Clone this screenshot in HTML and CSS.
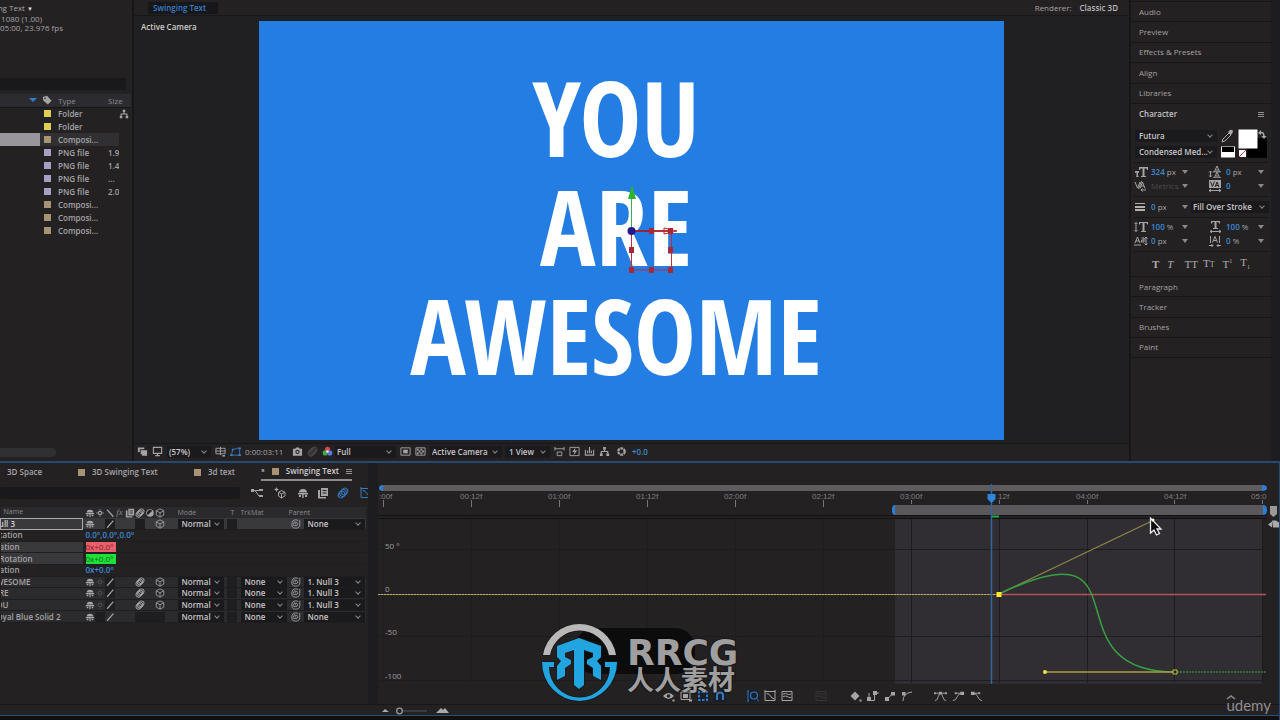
FILE: index.html
```html
<!DOCTYPE html>
<html lang="en">
<head>
<meta charset="utf-8">
<title>Swinging Text</title>
<link rel="stylesheet" href="styles.css">
</head>
<body>
<svg class="defs" aria-hidden="true">
  <symbol id="shy" viewBox="0 0 12 12"><path d="M2 5.500Q2 2 6 2t4 3.500zM1 6h10v1.500H1zM5.300 6h1.400v5H5.300zM2 8h2v2H2zM8 8h2v2H8z"/></symbol>
  <symbol id="sun" viewBox="0 0 12 12"><circle cx="6" cy="6" r="2" fill="none" stroke="currentColor" stroke-width="1.300"/><path d="M5.500 1.500h1V3h-1zM5.500 9h1v1.500h-1zM1.500 5.500H3v1H1.500zM9 5.500h1.500v1H9z"/></symbol>
  <symbol id="slash" viewBox="0 0 12 12"><path d="M2.500 10.500L10 2" stroke="currentColor" stroke-width="1.500"/></symbol>
  <symbol id="back" viewBox="0 0 12 12"><path d="M2.500 2L10 10.500" stroke="currentColor" stroke-width="1.500"/></symbol>
  <symbol id="film" viewBox="0 0 12 12"><path d="M4 1h7v8H4zM1 3h2v7h6v1.500H1z"/><path d="M5.500 3.500h4M5.500 6h4" stroke="#232122"/></symbol>
  <symbol id="blur" viewBox="0 0 12 12"><g fill="none" stroke="currentColor" stroke-width="1.100"><ellipse cx="7.500" cy="4.500" rx="3" ry="3.500" transform="rotate(35 7.500 4.500)"/><ellipse cx="6" cy="6" rx="3" ry="3.500" transform="rotate(35 6 6)"/><ellipse cx="4.500" cy="7.500" rx="3" ry="3.500" transform="rotate(35 4.500 7.500)"/></g></symbol>
  <symbol id="half" viewBox="0 0 12 12"><circle cx="6" cy="6" r="4.500"/><path d="M3.500 8.500a3.500 3.500 0 0 1 5-5z" fill="#232122"/></symbol>
  <symbol id="cube" viewBox="0 0 12 12"><path d="M6 1l4.500 2.300v5.200L6 11 1.500 8.500V3.300zM1.500 3.300L6 5.800l4.500-2.500M6 5.800V11" fill="none" stroke="currentColor"/></symbol>
  <symbol id="whip" viewBox="0 0 12 12"><path d="M6 6a1 1 0 0 1-1-1.500Q7.500 3 8 5.500T5 8 3 5.500 5 2.500M10.500 1v6q0 4-5 4T1 6t4.500-5q2 0 3 1" fill="none" stroke="currentColor"/></symbol>
  <symbol id="tree" viewBox="0 0 12 12"><path d="M4.500 1h3v3h-3zM1 8h3v3H1zM8 8h3v3H8z"/><path d="M6 4v2M2.500 8V6h7v2" fill="none" stroke="currentColor" stroke-width="1.300"/></symbol>
  <symbol id="tag" viewBox="0 0 12 12"><path d="M1 2.500L6 1l5.500 6L7 11.500 1.500 6.500z"/><circle cx="3.700" cy="4" r="1" fill="#2c2c30"/></symbol>
  <symbol id="screen" viewBox="0 0 12 12"><path d="M1.500 1.500h9v6.500h-9zM6 8v2.500M3.500 10.500h5" fill="none" stroke="currentColor" stroke-width="1.200"/></symbol>
  <symbol id="stack" viewBox="0 0 12 12"><path d="M1 1.500h7v2H3v3H1zM4 4.500h7v6H5.500V9H4z"/></symbol>
  <symbol id="grid" viewBox="0 0 12 12"><path d="M1 2.500h10v6H1zM6 1v9M1 5.500h10" fill="none" stroke="currentColor"/><path d="M8 10h3v1.500H8z"/></symbol>
  <symbol id="mask" viewBox="0 0 12 12"><path d="M1.500 10L3 4l5-1.500h2.500V10z" fill="none" stroke="currentColor"/><path d="M0 9h3v2H0zM9 9h3v2H9zM9 1.500h3v2H9zM2 3h2v2H2z"/></symbol>
  <symbol id="camera" viewBox="0 0 12 12"><path d="M1 3h2.500L4.500 1.500h3L8.500 3H11v7.500H1z"/><circle cx="6" cy="6.500" r="2.300" fill="#232122"/><circle cx="6" cy="6.500" r="1.200"/></symbol>
  <symbol id="frame" viewBox="0 0 12 12"><path d="M1 2h10v8H1z" fill="none" stroke="currentColor"/><path d="M3.500 4h5v4h-5z"/></symbol>
  <symbol id="checker" viewBox="0 0 12 12"><path d="M1 2h10v8H1z" fill="none" stroke="currentColor"/><path d="M2 3h2v2H2zM6 3h2v2H6zM4 5h2v2H4zM8 5h2v2H8zM2 7h2v2H2zM6 7h2v2H6z"/></symbol>
  <symbol id="ruler" viewBox="0 0 12 12"><path d="M1 1v4M11 1v4M1 3h10M3.500 6.500h5v4h-5z" fill="none" stroke="currentColor"/></symbol>
  <symbol id="fast" viewBox="0 0 12 12"><path d="M1 1.500h10v9H1z" fill="none" stroke="currentColor"/><path d="M7 2L3.500 6.500H6L5 10l4-5H6.500z"/></symbol>
  <symbol id="tl" viewBox="0 0 12 12"><path d="M1.500 4v6h9V4M4 5v3M6 1v7M8 5v3" fill="none" stroke="currentColor" stroke-width="1.200"/></symbol>
  <symbol id="aperture" viewBox="0 0 12 12"><circle cx="6" cy="6" r="3.500" fill="none" stroke="currentColor" stroke-width="2.500" stroke-dasharray="3 .7"/></symbol>
  <symbol id="flow" viewBox="0 0 12 12"><path d="M0 2h3v3H0zM3 3h5v1H3zM8 2h4v2H8zM8 8h4v2H8z"/><path d="M4 3.500l4 5.500" stroke="currentColor"/></symbol>
  <symbol id="draft" viewBox="0 0 12 12"><path d="M7.500 3.500L11 5.300v3.500L7.500 11 4.500 9V5.300zM4.500 5.300l3 1.500L11 5.300M7.500 7v4" fill="none" stroke="currentColor"/><path d="M2.500 0l.8 1.700L5 2.500l-1.700.8L2.500 5l-.8-1.700L0 2.500l1.700-.8z"/></symbol>
  <symbol id="graph" viewBox="0 0 12 12"><path d="M1 1.500h10v9H1zM2.500 3.500q3 0 4 2.500t4 3M1 0v2M11 0v2" fill="none" stroke="currentColor"/></symbol>
  <symbol id="eye" viewBox="0 0 12 12"><path d="M0 6q5.500-6 11 0-5.500 6-11 0z"/><circle cx="5.500" cy="6" r="1.800" fill="#232122"/><path d="M9.500 9.500h2v2h-2z"/></symbol>
  <symbol id="menuicon" viewBox="0 0 12 12"><path d="M1 2h9v7.500H1z" fill="none" stroke="currentColor"/><path d="M3 4h5v4H3zM9 9.500h3v2H9z"/></symbol>
  <symbol id="box" viewBox="0 0 12 12"><path d="M2 2h8v8H2z" fill="none" stroke="currentColor" stroke-dasharray="1 1"/><path d="M1 1h2v2H1zM5 1h2v2H5zM9 1h2v2H9zM1 5h2v2H1zM9 5h2v2H9zM1 9h2v2H1zM5 9h2v2H5zM9 9h2v2H9z"/></symbol>
  <symbol id="magnet" viewBox="0 0 12 12"><path d="M3 10V5.500a3 3 0 0 1 6 0V10" fill="none" stroke="currentColor" stroke-width="2"/></symbol>
  <symbol id="fit" viewBox="0 0 12 12"><path d="M1 1v10M0 1h2M0 11h2M9.500 8.500L12 11.500" stroke="currentColor"/><circle cx="7" cy="5.500" r="3.500" fill="none" stroke="currentColor" stroke-width="1.200"/></symbol>
  <symbol id="waves" viewBox="0 0 12 12"><path d="M1 1.500h10v9H1zM2 4q3-1 4 0t4 0M2 6.500q3-1 4 0t4 1" fill="none" stroke="currentColor"/></symbol>
  <symbol id="diamond" viewBox="0 0 12 12"><path d="M5 1.500L9.500 6 5 10.500.5 6zM9.500 9.500h2v2h-2z"/></symbol>
  <symbol id="hold" viewBox="0 0 12 12"><path d="M0 7h4v4H0zM6 1h4v4H6z"/><path d="M2 3v4M3 10.500h4.500V5M9 3h3" fill="none" stroke="currentColor"/></symbol>
  <symbol id="linear" viewBox="0 0 12 12"><path d="M1 7h4v4H1zM7 2h4v3.500H7z"/><path d="M3 9l6-5.500" stroke="currentColor"/></symbol>
  <symbol id="autob" viewBox="0 0 12 12"><path d="M1 2h3.500v3.500H1z"/><path d="M2 11Q2 3 11 2" fill="none" stroke="currentColor"/></symbol>
  <symbol id="ease" viewBox="0 0 14 12"><path d="M0 2h2v2H0zM5.500 1.500h3v3h-3zM12 2h2v2h-2z"/><path d="M1 3h12M1 11q2.500 0 3.500-4T7 3t2.500 4T13 11" fill="none" stroke="currentColor"/></symbol>
  <symbol id="easein" viewBox="0 0 14 12"><path d="M3 2h2v2H3zM9 1.500h4v3.500H9z"/><path d="M4 3h6M1 11q3 0 4.500-4T11 3" fill="none" stroke="currentColor"/></symbol>
  <symbol id="easeout" viewBox="0 0 14 12"><path d="M1 1.500h4v3.500H1zM9 2h2v2H9z"/><path d="M3 3h7M3 3q4 0 5.500 4T13 11" fill="none" stroke="currentColor"/></symbol>
  <symbol id="kern" viewBox="0 0 14 12"><path d="M1 2l2.500 6L6 2M6 8.500L8.500 2 11 8.500M7 6h3M7.500 1L4.500 9M12 10H7M8.500 8.500L7 10l1.500 1.500" fill="none" stroke="currentColor"/></symbol>
  <symbol id="track" viewBox="0 0 14 12"><path d="M1 0h12v8H1z"/><path d="M2.500 1.500l2 5 2-5M7 7l2-5 2 5M8 5.500h2.500" fill="none" stroke="#232122"/><path d="M1 10.500h12M3 9l-2 1.500L3 12M11 9l2 1.500-2 1.500" fill="none" stroke="currentColor"/></symbol>
  <symbol id="leading" viewBox="0 0 14 12"><path d="M6.500 5.500L9 0l2.500 5.500M7.500 4h3M6.500 11.500L9 6l2.500 5.500M7.500 10h3M5 5.800h8M5 11.800h8M2.500 5v6M1 6.500L2.500 5 4 6.500M1 9.500L2.500 11 4 9.500" fill="none" stroke="currentColor"/></symbol>
  <symbol id="hscale" viewBox="0 0 14 12"><path d="M3 0h9v2.500h-1L10.500 1H8.500v6H10v1H5V7h1.500V1h-2L4 2.500H3z"/><path d="M2 10.500h11M4 9l-2 1.500L4 12M11 9l2 1.500-2 1.500" fill="none" stroke="currentColor"/></symbol>
  <symbol id="vscale" viewBox="0 0 14 12"><path d="M5 1h9v2.500h-1L12.500 2h-2v8H12v1H7v-1h1.500V2h-2L6 3.500H5z"/><path d="M2 1.500v9M.5 3L2 1.500 3.500 3M.5 9L2 10.500 3.500 9" fill="none" stroke="currentColor"/></symbol>
  <symbol id="baseline" viewBox="0 0 14 12"><path d="M1 8l2.500-6L6 8M2 6h3M0 10h7M7.500 3h2.500v4H7.500V5H10M12 2v8M10.500 3.500L12 2l1.500 1.500M10.500 8.500L12 10l1.500-1.500" fill="none" stroke="currentColor"/></symbol>
  <symbol id="tsume" viewBox="0 0 14 12"><path d="M4.500 7.500L7 1.500l2.500 6M5.500 5.500h3M2.500 1v7M11.500 1v7M1 10.500h4M3.500 9L5 10.500 3.500 12M13 10.500H9M10.500 9L9 10.500l1.500 1.500" fill="none" stroke="currentColor"/></symbol>
  <symbol id="size" viewBox="0 0 14 12"><path d="M5 1h9v3h-1l-.5-1.500h-2V10H12v1H7v-1h1.500V2.500h-2L6 4H5zM1 5h4v2l-1-.5v4h1v.5H2v-.5h.5v-4L1 7z"/></symbol>
</svg>

<main class="upper">
  <section class="project">
    <div class="info">
      <p>Swinging Text <span class="down">▼</span></p>
      <p>1920 x 1080 (1.00)</p>
      <p>Δ 0:00:05:00, 23.976 fps</p>
    </div>
    <input class="search" type="text" aria-label="Search project">
    <table class="files">
      <thead><tr><th class="c-name"><i class="sort"></i></th><th class="c-tag"><svg class="ic"><use href="#tag"/></svg></th><th class="c-type">Type</th><th class="c-size">Size</th><th></th></tr></thead>
      <tbody>
        <tr><td></td><td><i class="sw yellow"></i></td><td>Folder</td><td></td><td><svg class="ic"><use href="#tree"/></svg></td></tr>
        <tr><td></td><td><i class="sw yellow"></i></td><td>Folder</td><td></td><td></td></tr>
        <tr class="picked"><td></td><td><i class="sw tan"></i></td><td>Composi...</td><td></td><td></td></tr>
        <tr><td></td><td><i class="sw lilac"></i></td><td>PNG file</td><td>1.9</td><td></td></tr>
        <tr><td></td><td><i class="sw lilac"></i></td><td>PNG file</td><td>1.4</td><td></td></tr>
        <tr><td></td><td><i class="sw lilac"></i></td><td>PNG file</td><td>...</td><td></td></tr>
        <tr><td></td><td><i class="sw lilac"></i></td><td>PNG file</td><td>2.0</td><td></td></tr>
        <tr><td></td><td><i class="sw tan"></i></td><td>Composi...</td><td></td><td></td></tr>
        <tr><td></td><td><i class="sw tan"></i></td><td>Composi...</td><td></td><td></td></tr>
        <tr><td></td><td><i class="sw tan"></i></td><td>Composi...</td><td></td><td></td></tr>
      </tbody>
    </table>
    <div class="hscroll"></div>
  </section>

  <section class="viewer">
    <header class="vhead">
      <button class="crumb">Swinging Text</button>
      <span class="rend">Renderer:</span><button class="classic">Classic 3D</button>
    </header>
    <div class="stage">
      <span class="camlabel">Active Camera</span>
      <div class="canvas">
        <div class="title"><span>YOU</span><span>ARE</span><span>AWESOME</span></div>
        <svg class="gizmo" viewBox="625 180 60 100">
          <path d="M631.500 231V197" stroke="#3cae4c"/><path d="M632 185l4 14h-8z" fill="#2db32d"/>
          <path d="M631.500 231h40v39h-40z" fill="none" stroke="#c02c3c"/>
          <path d="M631 231h42" stroke="#a01424" stroke-width="1.500"/><path d="M664 228v6l13-3z" fill="none" stroke="#c02020"/>
          <path d="M649 228h5v6h-5zM668 228h5v6h-5zM629 247h5v6h-5zM668 247h5v6h-5zM629 267h5v6h-5zM649 267h5v6h-5zM668 267h5v6h-5z" fill="#a52a35"/>
          <circle cx="631.500" cy="231" r="4" fill="#241a8c"/>
        </svg>
      </div>
    </div>
    <footer class="vfoot">
      <svg class="ic"><use href="#stack"/></svg><svg class="ic"><use href="#screen"/></svg>
      <label class="sel zoom"><select aria-label="Zoom"><option>(57%)</option></select></label>
      <svg class="ic"><use href="#grid"/></svg><svg class="ic blue"><use href="#mask"/></svg>
      <span class="time">0:00:03:11</span>
      <svg class="ic"><use href="#camera"/></svg><svg class="ic faint"><use href="#blur"/></svg>
      <svg class="ic" viewBox="0 0 12 12"><circle cx="6" cy="3.500" r="2.800" fill="#d84848"/><circle cx="3.500" cy="7.500" r="2.800" fill="#42a844"/><circle cx="8.500" cy="7.500" r="2.800" fill="#5878e0"/><circle cx="6" cy="6" r="1.300" fill="#eee"/></svg>
      <label class="sel res"><select aria-label="Resolution"><option>Full</option></select></label>
      <svg class="ic"><use href="#frame"/></svg><svg class="ic"><use href="#checker"/></svg>
      <label class="sel cam"><select aria-label="Camera"><option>Active Camera</option></select></label>
      <label class="sel view"><select aria-label="Views"><option>1 View</option></select></label>
      <svg class="ic"><use href="#ruler"/></svg><svg class="ic"><use href="#fast"/></svg><svg class="ic"><use href="#tl"/></svg><svg class="ic"><use href="#tree"/></svg><svg class="ic aper"><use href="#aperture"/></svg>
      <span class="val">+0.0</span>
    </footer>
  </section>

  <aside class="side">
    <nav class="acc five"><button>Audio</button><button>Preview</button><button>Effects &amp; Presets</button><button>Align</button><button>Libraries</button></nav>
    <section class="char">
      <header class="chead"><span>Character</span><button aria-label="Panel menu" class="burger"><i></i></button></header>
      <div class="fontbox">
        <div class="fonts">
          <label class="sel"><select aria-label="Font family"><option>Futura</option></select></label>
          <label class="sel"><select aria-label="Font style"><option>Condensed Med...</option></select></label>
        </div>
        <svg class="swatches" viewBox="1219 127 50 34">
          <path d="M1222 142l1-3 6-6 2 2-6 6z" fill="none" stroke="#aaa"/><path d="M1228 132l2-2q3-1 3 2l-2 3z" fill="#aaa"/>
          <path d="M1221 146.500h14v11h-14z" fill="#fff"/><path d="M1222 147h12v5h-12z" fill="#000"/>
          <path d="M1247 138h20v20h-20z" fill="#000"/><path d="M1238.500 129.500h19v19h-19z" fill="#fff"/>
          <path d="M1239 150h7v7h-7z" fill="#fff"/><path d="M1239 157l7-7" stroke="#c33"/>
          <path d="M1260 133q4-2 4 4" fill="none" stroke="#aaa" stroke-width="1.500"/><path d="M1258 133l3-3v5zM1261.500 136h5l-2.500 3z" fill="#aaa"/>
        </svg>
      </div>
      <div class="metrics">
        <svg class="ic g"><use href="#size"/></svg><span class="num"><b>324</b> px</span><i class="tri"></i><svg class="ic g"><use href="#leading"/></svg><span class="num"><b>0</b> px</span><i class="tri"></i>
        <svg class="ic g"><use href="#kern"/></svg><span class="num off">Metrics</span><i class="tri"></i><svg class="ic g"><use href="#track"/></svg><span class="num"><b>0</b></span><i class="tri"></i>
      </div>
      <div class="stroke">
        <i class="lines"></i><span class="num"><b>0</b> px</span><i class="tri"></i><label class="sel"><select aria-label="Stroke order"><option>Fill Over Stroke</option></select></label>
      </div>
      <div class="metrics">
        <svg class="ic g"><use href="#vscale"/></svg><span class="num"><b>100</b> %</span><i class="tri"></i><svg class="ic g"><use href="#hscale"/></svg><span class="num"><b>100</b> %</span><i class="tri"></i>
        <svg class="ic g"><use href="#baseline"/></svg><span class="num"><b>0</b> px</span><i class="tri"></i><svg class="ic g"><use href="#tsume"/></svg><span class="num"><b>0</b> %</span><i class="tri"></i>
      </div>
      <div class="styles"><button><b>T</b></button><button><em>T</em></button><button>TT</button><button>T<small>T</small></button><button>T<sup>1</sup></button><button>T<sub>1</sub></button></div>
    </section>
    <nav class="acc four"><button>Paragraph</button><button>Tracker</button><button>Brushes</button><button>Paint</button></nav>
  </aside>
</main>

<section class="timeline">
  <div class="layers">
    <nav class="tabs">
      <button class="t1">3D Space</button><button class="t2"><i class="sw tan"></i>3D Swinging Text</button><button class="t3"><i class="sw tan"></i>3d text</button><button class="t4 on"><small>×</small><i class="sw tan"></i>Swinging Text<span class="burger"><i></i></span></button>
    </nav>
    <div class="tools">
      <input type="text" class="search" aria-label="Search layers">
      <svg class="ic flow"><use href="#flow"/></svg><svg class="ic draft"><use href="#draft"/></svg><svg class="ic"><use href="#shy"/></svg><svg class="ic"><use href="#film"/></svg><svg class="ic blue"><use href="#blur"/></svg><svg class="ic blue last"><use href="#graph"/></svg>
    </div>
    <table class="rows">
      <colgroup><col class="k-name"><col class="k-sw"><col class="k-mode"><col class="k-t"><col class="k-trk"><col class="k-par"><col></colgroup>
      <thead><tr><th class="lname">Name</th><th><span class="sws"><svg class="ic"><use href="#shy"/></svg><svg class="ic"><use href="#sun"/></svg><svg class="ic"><use href="#back"/></svg><em>fx</em><svg class="ic"><use href="#film"/></svg><svg class="ic"><use href="#blur"/></svg><svg class="ic"><use href="#half"/></svg><svg class="ic"><use href="#cube"/></svg></span></th><th>Mode</th><th class="tcol">T</th><th>TrkMat</th><th>Parent</th><th></th></tr></thead>
      <tbody>
        <tr class="layer hot"><td class="nm boxed"><span>Null 3</span></td><td><span class="sws"><svg class="ic"><use href="#shy"/></svg><i></i><svg class="ic cell"><use href="#slash"/></svg><i></i><i></i><i class="cell"></i><i></i><svg class="ic"><use href="#cube"/></svg></span></td><td><label class="sel"><select aria-label="Mode"><option>Normal</option></select></label></td><td><i class="cell"></i></td><td></td><td><span class="par"><svg class="ic"><use href="#whip"/></svg><label class="sel"><select aria-label="Parent"><option>None</option></select></label></span></td><td></td></tr>
        <tr><td class="nm">Orientation</td><td colspan="6" class="v"><b>0.0°,0.0°,0.0°</b></td></tr>
        <tr class="prop"><td class="nm">X Rotation</td><td colspan="6" class="v"><mark class="red">0x+0.0°</mark></td></tr>
        <tr class="prop"><td class="nm">Y Rotation</td><td colspan="6" class="v"><mark class="green">0x+0.0°</mark></td></tr>
        <tr><td class="nm">Z Rotation</td><td colspan="6" class="v"><b>0x+0.0°</b></td></tr>
        <tr class="layer"><td class="nm wide">AWESOME</td><td><span class="sws"><svg class="ic"><use href="#shy"/></svg><svg class="ic faint"><use href="#sun"/></svg><svg class="ic cell"><use href="#slash"/></svg><i></i><i></i><svg class="ic"><use href="#blur"/></svg><i></i><svg class="ic"><use href="#cube"/></svg></span></td><td><label class="sel"><select aria-label="Mode"><option>Normal</option></select></label></td><td><i class="cell"></i></td><td><label class="sel"><select aria-label="Matte"><option>None</option></select></label></td><td><span class="par"><svg class="ic"><use href="#whip"/></svg><label class="sel"><select aria-label="Parent"><option>1. Null 3</option></select></label></span></td><td></td></tr>
        <tr class="layer"><td class="nm are">ARE</td><td><span class="sws"><svg class="ic"><use href="#shy"/></svg><svg class="ic faint"><use href="#sun"/></svg><svg class="ic cell"><use href="#slash"/></svg><i></i><i></i><svg class="ic"><use href="#blur"/></svg><i></i><svg class="ic"><use href="#cube"/></svg></span></td><td><label class="sel"><select aria-label="Mode"><option>Normal</option></select></label></td><td><i class="cell"></i></td><td><label class="sel"><select aria-label="Matte"><option>None</option></select></label></td><td><span class="par"><svg class="ic"><use href="#whip"/></svg><label class="sel"><select aria-label="Parent"><option>1. Null 3</option></select></label></span></td><td></td></tr>
        <tr class="layer"><td class="nm you">YOU</td><td><span class="sws"><svg class="ic"><use href="#shy"/></svg><svg class="ic faint"><use href="#sun"/></svg><svg class="ic cell"><use href="#slash"/></svg><i></i><i></i><svg class="ic"><use href="#blur"/></svg><i></i><svg class="ic"><use href="#cube"/></svg></span></td><td><label class="sel"><select aria-label="Mode"><option>Normal</option></select></label></td><td><i class="cell"></i></td><td><label class="sel"><select aria-label="Matte"><option>None</option></select></label></td><td><span class="par"><svg class="ic"><use href="#whip"/></svg><label class="sel"><select aria-label="Parent"><option>1. Null 3</option></select></label></span></td><td></td></tr>
        <tr class="layer"><td class="nm solid">Royal Blue Solid 2</td><td><span class="sws"><svg class="ic"><use href="#shy"/></svg><i class="cell"></i><svg class="ic"><use href="#slash"/></svg><i></i><i></i><i class="cell"></i><i class="cell"></i><i class="cell"></i></span></td><td><label class="sel"><select aria-label="Mode"><option>Normal</option></select></label></td><td><i class="cell"></i></td><td><label class="sel"><select aria-label="Matte"><option>None</option></select></label></td><td><span class="par"><svg class="ic"><use href="#whip"/></svg><label class="sel"><select aria-label="Parent"><option>None</option></select></label></span></td><td></td></tr>
      </tbody>
    </table>
  </div>

  <div class="grapher">
    <svg class="plot" viewBox="378 482 901 202">
      <path d="M895 518h368v166H895z" fill="#302e32"/>
      <path d="M383.500 518v165M471.500 518v165M559.500 518v165M647.500 518v165M735.500 518v165M823.500 518v165M911.500 518v165M999.500 518v165M1087.500 518v165M1174.500 518v165M1262.500 518v165M378 549.500h885M378 636.500h885M378 680.500h885" stroke="#1d1c1e" fill="none"/>
      <path d="M378 515.500h888M378 518.500h888" stroke="#121113"/>
      <path d="M383 485h880v6H383z" fill="#5e5c5e"/>
      <path d="M383 485v6q-4 0-4-3t4-3zM1262 485v6q5 0 5-3t-5-3z" fill="#2c7fd6"/>
      <path d="M895 505h368v10H895z" fill="#5a585a"/>
      <path d="M895 505v10q-3 0-3-5t3-5zM1263 505v10q4 0 4-5t-4-5z" fill="#2c7fd6"/>
      <path d="M383.500 500v7M471.500 500v7M559.500 500v7M647.500 500v7M735.500 500v7M823.500 500v7M911.500 500v4M999.500 500v4M1087.500 500v4M1174.500 500v4M1262.500 500v4" stroke="#777578"/>
      <g class="ticks"><text x="379" y="499">:00f</text><text x="460" y="499">00:12f</text><text x="548" y="499">01:00f</text><text x="636" y="499">01:12f</text><text x="724" y="499">02:00f</text><text x="812" y="499">02:12f</text><text x="900" y="499">03:00f</text><text x="998" y="499">12f</text><text x="1076" y="499">04:00f</text><text x="1164" y="499">04:12f</text><text x="1251" y="499">05:0</text></g>
      <g class="scale"><text x="385" y="549">50 °</text><text x="385" y="592">0</text><text x="385" y="635">-50</text><text x="385" y="679">-100</text></g>
      <path d="M378 594.500h621" stroke="#77754f"/><path d="M378 594.500h621" stroke="#b3ad5d" stroke-dasharray="2 1"/>
      <path d="M999 594.500h267" stroke="#b8505a" stroke-width="1.500"/>
      <path d="M992 516.500h7" stroke="#20b040" stroke-width="2"/>
      <path d="M999 594L1152 521" stroke="#8f8647" stroke-width="1.300"/>
      <path d="M999 594C1152 521 1045 672 1175 672" fill="none" stroke="#37a344" stroke-width="1.500"/>
      <path d="M1177 672h89" stroke="#37a344" stroke-width="1.200" stroke-dasharray="2 1"/>
      <path d="M1045 672h130" stroke="#a3a23c" stroke-width="1.300"/>
      <circle cx="1045" cy="672" r="2" fill="#f0e04a"/><path d="M996.500 592h5v5h-5z" fill="#ffe82e"/><path d="M1173 670h4v4h-4z" fill="#222" stroke="#c5c23e"/>
      <path d="M991.500 484v200" stroke="#33669b" stroke-width="1.500"/><path d="M987.500 494h8v5l-4 4-4-4z" fill="#2f86de"/>
      <path d="M1270 506h7v8l-3.500 3-3.500-3z" fill="#999"/><path d="M1268 524.500l4-3v6zM1272 520.500h4l3 2v5h-6z" fill="#aaa"/>
      <path d="M1150.500 518v15l3.500-3 2.500 5 3-1.500-2.500-4.500h4z" fill="#0c0c0c" stroke="#eee" stroke-width="1.300"/><circle cx="1153" cy="520" r="1.500" fill="#ffe"/>
    </svg>
    <div class="gtools">
      <svg class="ic"><use href="#eye"/></svg><svg class="ic"><use href="#menuicon"/></svg><svg class="ic blue lit"><use href="#box"/></svg><svg class="ic blue lit"><use href="#magnet"/></svg>
      <svg class="ic blue lit g2"><use href="#fit"/></svg><svg class="ic"><use href="#graph"/></svg><svg class="ic"><use href="#waves"/></svg>
      <svg class="ic ghost"><use href="#waves"/></svg>
      <svg class="ic g3"><use href="#diamond"/></svg><svg class="ic"><use href="#hold"/></svg><svg class="ic"><use href="#linear"/></svg><svg class="ic"><use href="#autob"/></svg>
      <svg class="ic wideic g2"><use href="#ease"/></svg><svg class="ic wideic"><use href="#easein"/></svg><svg class="ic wideic"><use href="#easeout"/></svg>
    </div>
  </div>
  <footer class="tfoot">
    <svg class="zoomer" viewBox="380 704 72 12"><path d="M382 711l3-3 4 3zM436 712l5-5 2 2 2-2 4 5z" fill="#aaa"/><path d="M403 710h24" stroke="#3c3a3e" stroke-width="2"/><circle cx="399.500" cy="710" r="2.800" fill="none" stroke="#999" stroke-width="1.300"/></svg>
  </footer>
</section>

<div class="mark">
  <svg class="pill" viewBox="0 0 120 46"><rect width="120" height="46" rx="20"/></svg>
  <svg class="logo" viewBox="540 624 80 80">
    <g stroke="#171717" stroke-width="1.500" paint-order="stroke">
      <path d="M543 655a37 37 0 0 1 73 0h-7a30 30 0 0 0-59 0z" fill="#b9b8b8"/>
      <path d="M542 662h12v5h-5a30 30 0 0 0 61 0h-5v-5h12a37.500 39 0 0 1-75 0z" fill="#22a4e0"/>
      <path d="M579 638L601 646V657L597 661 601 666V680L593 676V668L587 664V660L593 657V653L584 650V685L579 689 574 685V650L565 653V657L571 660V664L565 668V676L557 680V666L561 661 557 657V646z" fill="#22a4e0"/>
    </g>
  </svg>
  <div class="words"><strong>RRCG</strong><span lang="zh">人人素材</span></div>
</div>
<div class="udemy"><svg viewBox="0 0 10 5"><path d="M1 4l4-3 4 3" fill="none" stroke="currentColor" stroke-width="1.500"/></svg>udemy</div>
</body>
</html>
```
FILE: styles.css
```css
* { box-sizing: border-box; }
body {
  margin: 0;
  min-height: 100vh;
  display: grid;
  grid-template-rows: minmax(461px, 1fr) auto;
  background: #171618;
  color: #a6a4a6;
  font: 8px/12px "Open Sans", "Noto Sans", sans-serif;
  overflow: hidden;
}
p { margin: 0; }
button, select, input { font: inherit; color: inherit; background: none; border: 0; padding: 0; margin: 0; }
button { text-align: left; white-space: nowrap; }
.defs { position: absolute; width: 0; height: 0; }
.ic { width: 12px; height: 12px; flex: none; display: block; fill: currentColor; color: #a6a4a6; }
.blue { color: #3478bd; }
.faint { color: #4c4a4d; }
.sw { display: block; width: 7px; height: 7px; flex: none; }
.yellow { background: #ddd052; }
.tan { background: #a99377; }
.lilac { background: #a6a0c4; }

.sel { position: relative; display: block; background: #1a191b; color: #c8c6c8; font-weight: 600; min-width: 0; }
.sel select { appearance: none; width: 100%; height: 100%; padding-left: 4px; display: block; border-radius: 0; }
.sel::after {
  content: ""; position: absolute; right: 5px; top: 3px; width: 3px; height: 3px;
  border: solid #88868a; border-width: 0 1px 1px 0; transform: rotate(45deg); pointer-events: none;
}

/* upper workspace */
.upper { display: grid; grid-template-columns: 132px minmax(0, 1fr) 149px; gap: 2px; }
.project, .viewer, .side { background: #232122; }
.project { display: flex; flex-direction: column; min-width: 0; overflow: hidden; }
.info { width: 64px; height: 78px; padding-top: 3px; display: flex; flex-direction: column; align-items: flex-end; line-height: 9px; white-space: nowrap; }
.info p { margin-right: 1px; }
.info p:first-child { margin-right: 31px; }
.info p:nth-child(2) { margin-right: 22px; }
.down { font-size: 6px; color: #ddd; }
.search { background: #19181a; height: 12px; margin-right: 6px; border-radius: 2px; }
.files { width: 131px; table-layout: fixed; border-collapse: collapse; margin-top: 4px; line-height: 11px; }
.files th, .files td { padding: 0; height: 13px; text-align: left; font-weight: 400; white-space: nowrap; overflow: hidden; }
.files th { background: #2c2c30; border-bottom: 1px solid #171618; color: #8b898c; }
.files td { font-weight: 600; }
.c-name { width: 40px; } .c-tag { width: 18px; } .c-type { width: 50px; } .c-size { width: 11px; }
.files .ic { width: 10px; height: 10px; }
.files td .sw { margin-left: 4px; }
.files th .ic { margin-left: 2px; }
.files th.c-size { overflow: visible; }
.sort { display: block; width: 0; margin-left: 29px; border: 4px solid transparent; border-top-color: #2f7dcb; border-bottom: 0; }
.picked td { background: #303033; }
.picked td:first-child { background: #98969b; }
.picked td:last-child { background: none; }
.hscroll { width: 56px; height: 9px; background: #303032; border-radius: 0 5px 5px 0; margin-top: auto; margin-bottom: 4px; }

.viewer { display: flex; flex-direction: column; background: #202022; }
.vhead { height: 16px; display: flex; align-items: center; padding: 0 11px 0 14px; background: #232122; border-bottom: 1px solid #171618; }
.crumb { width: 70px; padding-left: 5px; background: #171618; color: #3480cb; font-weight: 600; }
.rend { margin-left: auto; margin-right: 8px; }
.classic { font-weight: 600; color: #bab8ba; }
.stage { flex: 1; position: relative; display: flex; justify-content: center; padding: 5px 0 3px; }
.camlabel { position: absolute; left: 7px; top: 5px; font-weight: 600; color: #cfccc8; }
.canvas { position: relative; width: 745px; background: #247de3; }
.title { display: flex; flex-direction: column; align-items: center; padding: 41px 31px 0 0; color: #fff; font: 104px/109px "Open Sans Condensed", "Liberation Sans Narrow", "Roboto Condensed", sans-serif; }
.gizmo { position: absolute; left: 366px; top: 159px; width: 60px; height: 100px; }
.vfoot { height: 18px; display: flex; align-items: center; gap: 4px; padding: 0 0 2px 3px; background: #232122; border-top: 1px solid #171618; white-space: nowrap; }
.vfoot .ic { width: 11px; height: 11px; }
.zoom { width: 44px; } .res { width: 61px; } .cam { width: 72px; } .view { width: 45px; }
.vfoot .zoom select { padding-left: 2px; }
.vfoot .sel { height: 12px; }
.vfoot .res { margin-left: -2px; }
.vfoot .sel + .sel { margin-left: -1px; }
.vfoot .res select, .vfoot .cam select { padding-left: 2px; }
.vfoot .aper { margin-left: 2px; }
.time { width: 43px; }
.val { margin-left: 1px; }
.val, .num b { color: #3d8bd4; font-weight: 600; }

.side { border-right: 9px solid #1d1d21; display: flex; flex-direction: column; }
.acc { display: grid; grid-auto-rows: 1fr; }
.acc button { padding-left: 8px; border-top: 1px solid #161517; color: #a3a1a4; }
.five { height: 103px; padding-top: 1px; }
.four { height: 82px; border-bottom: 1px solid #161517; }
.char { height: 173px; border-top: 1px solid #161517; }
.chead { height: 20px; display: flex; justify-content: space-between; align-items: center; padding: 0 7px 0 8px; font-weight: 600; color: #c3c1c4; }
.burger i { display: block; width: 6px; height: 5px; border: solid #929094; border-width: 1px 0; background: linear-gradient(#929094, #929094) center / 6px 1px no-repeat; }
.fontbox { display: grid; grid-template-columns: 82px 50px; gap: 2px; padding: 3px 0 0 4px; height: 38px; }
.fonts { display: grid; grid-auto-rows: 12px; gap: 4px; padding-top: 3px; }
.fonts .sel { white-space: nowrap; }
.swatches { width: 50px; height: 34px; }
.metrics { display: grid; grid-template-columns: 14px 32px 25px 15px 33px 14px; grid-auto-rows: 14px; align-items: center; height: 34px; margin: 0 3px; padding-top: 2px; border-top: 1px solid #171618; column-gap: 1px; }
.g { width: 14px; }
.num { padding-left: 2px; white-space: nowrap; }
.off { color: #4d4b4e; }
.tri { justify-self: start; width: 0; border: 3px solid transparent; border-top: 4px solid #8b898c; border-bottom: 0; }
.stroke { display: grid; grid-template-columns: 14px 32px 8px 78px; column-gap: 1px; align-items: center; height: 21px; margin: 0 3px; border-top: 1px solid #171618; }
.stroke .sel select { padding-left: 2px; }
.lines { width: 10px; height: 8px; margin-left: 1px; border: solid #b0aeb0; border-width: 1px 0 2px; background: linear-gradient(#b0aeb0, #b0aeb0) center / 10px 2px no-repeat; }
.styles { display: flex; gap: 8px; height: 24px; align-items: center; margin: 0 3px; padding-left: 18px; border-top: 1px solid #171618; font: 11px/12px "Liberation Serif", serif; color: #b0aeb0; }
.styles button:nth-child(2) { margin-right: 3px; }
.styles button:nth-child(3) { margin-right: -3px; }
.styles small { font-size: 8px; }
.styles sup, .styles sub { font-size: 6px; line-height: 6px; }

/* timeline */
.timeline { display: grid; grid-template-columns: 378px minmax(0, 1fr); border-top: 2px solid #244a72; background: #232122; border-right: 1px solid #244a72; }
.layers { height: 241px; overflow: hidden; border-right: 10px solid #1d1d20; }
.tabs { display: flex; height: 18px; align-items: stretch; font-weight: 600; }
.tabs button { display: flex; align-items: center; gap: 7px; }
.t1 { width: 78px; }
.tabs .t1 { padding-left: 7px; }
.t2 { width: 116px; } .t3 { width: 67px; }
.tabs .on { gap: 7px; color: #d0ced0; border-bottom: 2px solid #8d8b8e; }
.tools { display: flex; align-items: center; height: 26px; gap: 8px; padding-bottom: 2px; }
.tools .search { width: 240px; margin: 0; flex: none; }
.tools .flow { margin-left: 3px; }
.tools .draft { margin: 0 3px; }
.tools .last { margin-left: 3px; }
.rows { width: 366px; height: 116px; table-layout: fixed; border-collapse: collapse; line-height: 10px; }
.rows th, .rows td { padding: 0; text-align: left; font-weight: 400; white-space: nowrap; overflow: hidden; }
.rows th { background: #2a292b; color: #8b898c; height: 11px; font-size: 7px; }
.k-name { width: 82px; } .k-sw { width: 95px; } .k-mode { width: 49px; } .k-t { width: 14px; } .k-trk { width: 48px; } .k-par { width: 76px; }
.rows .lname { padding-left: 3px; }
.rows .tcol { padding-left: 4px; }
.rows td { height: 11px; border-bottom: 1px solid #1e1d1f; }
.rows .ic, .sws i, .sws em { width: 10px; height: 10px; flex: none; }
.sws { display: flex; padding-left: 2px; }
.sws em { font: italic 9px/9px "Liberation Serif", serif; text-align: center; }
.cell { display: block; background: #1e1d1f; width: 10px; height: 10px; }
.layer { background: #2b2a2c; }
.hot { background: #39383b; }
.rows .nm { direction: rtl; font-weight: 600; }
.rows .boxed { border: 1px solid #aaa; padding-right: 67px; color: #d0ced0; }
.prop .nm { background: #39383b; }
.rows tr:nth-child(2) .nm { padding-right: 60px; }
.rows tr:nth-child(3) .nm, .rows tr:nth-child(5) .nm { padding-right: 63px; }
.rows tr:nth-child(4) .nm { padding-right: 50px; }
.rows .wide { padding-right: 52px; }
.rows .are, .rows .you { padding-right: 74px; }
.rows .solid { padding-right: 22px; }
.rows .sel { height: 10px; width: 46px; }
.rows .sel::after { top: 2px; }
.par { display: flex; gap: 3px; padding-left: 2px; }
.rows .par .sel { width: 61px; }
.rows .v { padding-left: 3px; }
.v b { color: #3d8bd4; font-weight: 600; }
mark { display: block; width: 30px; height: 10px; line-height: 10px; overflow: hidden; }
.red { background: #e8606a; color: #7a2430; }
.green { background: #1fe03a; color: #0b6a1c; }

.grapher { min-width: 0; padding-top: 19px; }
.plot { display: block; width: 100%; }
.ticks text { font: 8px "Liberation Sans", sans-serif; fill: #817f82; }
.scale text { font: 8px "Open Sans", sans-serif; fill: #a19fa2; }
.gtools { height: 20px; display: flex; align-items: center; gap: 5px; padding: 4px 0 0 285px; }
.gtools .g2 { margin-left: 16px; }
.lit { background: #17202c; }
.ghost { opacity: .15; margin-left: 17px; }
.g3 { margin-left: 18px; }
.wideic { width: 13px; }
.tfoot { grid-column: 1 / -1; height: 16px; border-top: 1px solid #171618; border-bottom: 4px solid #101013; box-shadow: inset 0 -1px #2b5078; padding-left: 380px; }
.zoomer { display: block; width: 72px; height: 12px; }

/* overlays */
.mark { position: absolute; left: 540px; bottom: 16px; width: 210px; height: 80px; display: flex; }
.pill { position: absolute; left: 35px; top: 4px; width: 120px; height: 46px; fill: #0d0c0d; }
.logo { position: relative; width: 80px; height: 80px; flex: none; }
.words { position: relative; display: flex; flex-direction: column; padding: 11px 0 0 7px; color: #a09fa0; text-shadow: 0 0 2px #000; }
.words strong { font: 700 36px/36px "DejaVu Sans", sans-serif; }
.words span { font: 700 27px/16px "Noto Sans CJK SC", sans-serif; }
.udemy { position: absolute; right: 9px; bottom: 5px; font: 15px/20px Lato, sans-serif; color: #8f8d90; }
.udemy svg { position: absolute; left: 0; top: 0; width: 10px; height: 5px; }
```
